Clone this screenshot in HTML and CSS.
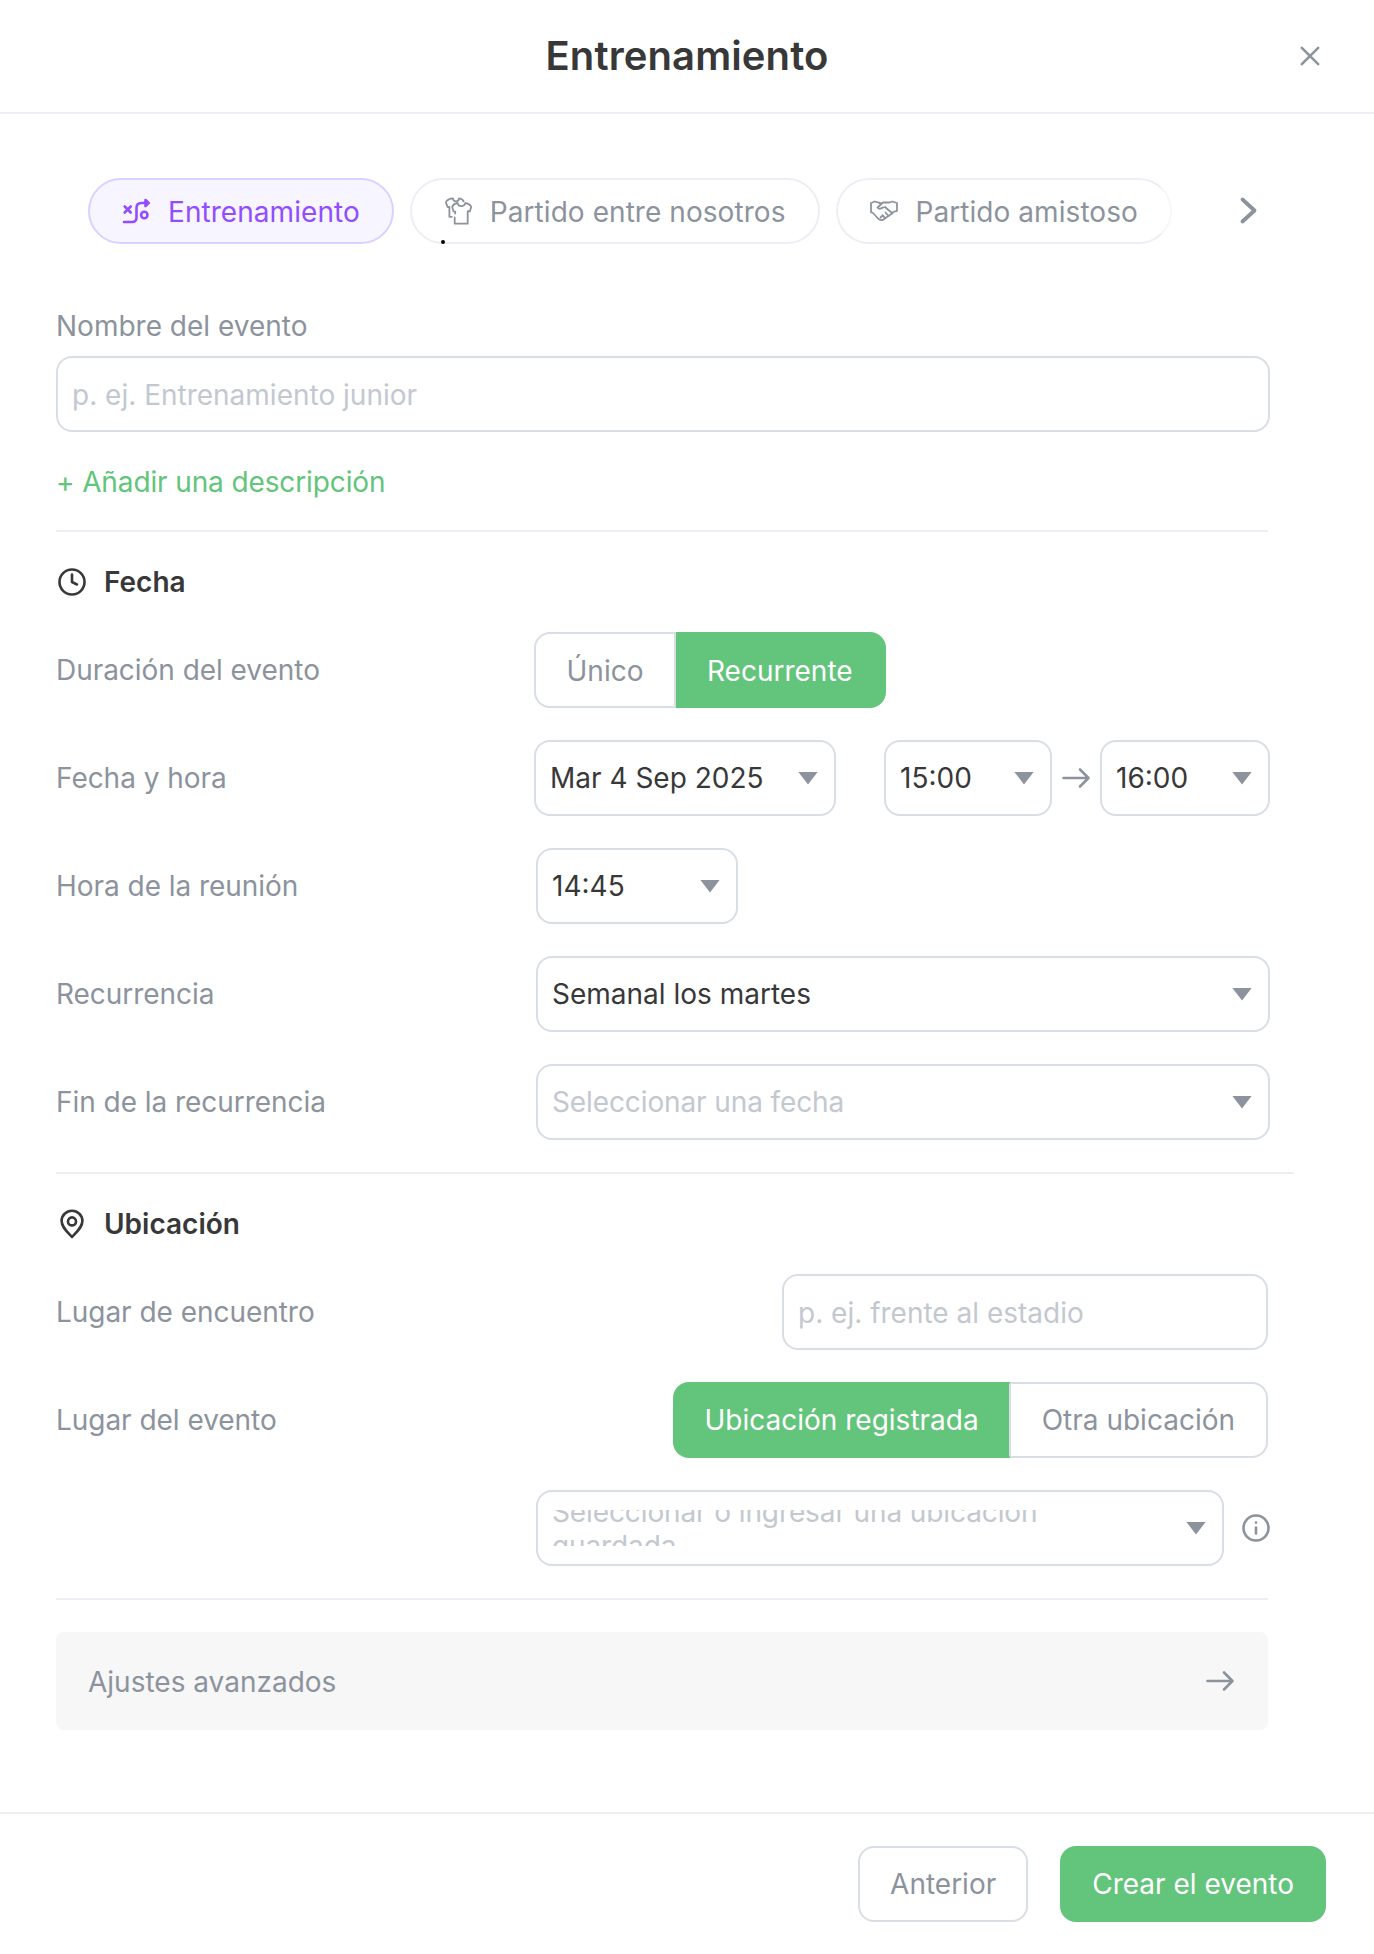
FILE: index.html
```html
<!DOCTYPE html>
<html lang="es">
<head>
  <meta charset="UTF-8" />
  <meta name="viewport" content="width=device-width, initial-scale=1.0"/>
  <title>Entrenamiento</title>
  <link rel="stylesheet" href="styles.css">
</head>
<body>

  <div class="modal">
    <header class="modal-header">
      <h1>Entrenamiento</h1>
      <button class="close" aria-label="Cerrar">
        <svg width="24" height="24" viewBox="0 0 24 24"><path d="M3.800 3.800l16.400 16.400M20.200 3.800l-16.400 16.400"/></svg>
      </button>
    </header>

    <main class="modal-body">
      <div class="types">
        <div class="type-list">
          <button class="type active">
            <svg width="32" height="32" viewBox="0 0 32 32">
              <path d="M4.700 11.500l6 6M10.700 11.500l-6 6M4 27h8q4.500 0 4.500-4.500V13q0-5 5-5h7"/>
              <path d="M25.500 5l3 3-3 3z" fill="currentColor"/>
              <circle cx="24.300" cy="20" r="3.200"/>
            </svg>
            Entrenamiento
          </button>
          <button class="type">
            <svg class="thin" width="32" height="32" viewBox="0 0 32 32">
              <path d="M9.800 21.800H7.400V11.800L5.600 12 4 7.600q.2-2.400 4.600-4l2.300-.2q.4 3 3.100 3T17 3.400q3.800.6 4.600 3"/>
              <path d="M12.700 22.500v6.200h13v-12.500l2.100.2 1.400-4.400q-1-3-5.800-4-1 3.200-4 3.200T15.500 8q-4.500.8-5.300 4l1.400 4.400 1.600.2v2"/>
            </svg>
            Partido entre nosotros
            <span class="type-dot"></span>
          </button>
          <button class="type">
            <svg class="thin" width="32" height="32" viewBox="0 0 32 32">
              <path d="M11.500 7.800L7 6.500 3 8v9.200l2 .8 5.500 6q3 2 4.500.7l9-6.200 1.200-1.500 3.800-1.200V8l-4.500-1.500-3 1H15l-5.500 5q1.800 2.500 5.500 0l2-.5 7.500 6.500"/>
              <path d="M11.500 7.800l2 .8M12.500 22.500l2-2M17.500 17.500l3 3.500M14.500 20.200l2.500 3"/>
            </svg>
            Partido amistoso
          </button>
        </div>
        <button class="next" aria-label="Siguiente">
          <svg width="32" height="32" viewBox="0 0 32 32"><path d="M9.500 4.500L21.500 15.500 9.500 26.500"/></svg>
        </button>
      </div>

      <label class="label" for="name">Nombre del evento</label>
      <input class="field name" id="name" type="text" placeholder="p. ej. Entrenamiento junior" />
      <a class="add">+ Añadir una descripción</a>

      <section class="group">
        <h2>
          <svg width="32" height="32" viewBox="0 0 32 32"><circle cx="16" cy="16" r="12.500"/><path d="M16 8.500V16l5 2.500"/></svg>
          Fecha
        </h2>
        <div class="row">
          <span class="label">Duración del evento</span>
          <div class="controls">
            <div class="switch">
              <button class="option once">Único</button>
              <button class="option active">Recurrente</button>
            </div>
          </div>
        </div>
        <div class="row">
          <span class="label">Fecha y hora</span>
          <div class="controls">
            <div class="field select date">Mar 4 Sep 2025</div>
            <div class="field select start">15:00</div>
            <svg class="arrow" width="32" height="32" viewBox="0 0 32 32"><path d="M3.500 16h25M20 7.500l8.500 8.500-8.500 8.500"/></svg>
            <div class="field select end">16:00</div>
          </div>
        </div>
        <div class="row">
          <span class="label">Hora de la reunión</span>
          <div class="controls inset">
            <div class="field select meeting">14:45</div>
          </div>
        </div>
        <div class="row">
          <span class="label">Recurrencia</span>
          <div class="controls inset">
            <div class="field select wide">Semanal los martes</div>
          </div>
        </div>
        <div class="row">
          <span class="label">Fin de la recurrencia</span>
          <div class="controls inset">
            <div class="field select wide empty">Seleccionar una fecha</div>
          </div>
        </div>
      </section>

      <section class="group group-wide">
        <h2>
          <svg width="32" height="32" viewBox="0 0 32 32"><path d="M16 29C11 23.500 5.600 19 5.600 13a10.400 10.200 0 0 1 20.800 0C26.400 19 21 23.500 16 29z"/><circle cx="16" cy="13.400" r="4"/></svg>
          Ubicación
        </h2>
        <div class="row">
          <span class="label">Lugar de encuentro</span>
          <input class="field place" type="text" placeholder="p. ej. frente al estadio" />
        </div>
        <div class="row">
          <span class="label">Lugar del evento</span>
          <div class="switch place-switch">
            <button class="option active">Ubicación registrada</button>
            <button class="option">Otra ubicación</button>
          </div>
        </div>
        <div class="row">
          <span class="label"></span>
          <div class="controls inset">
            <div class="field select saved empty">
              <div class="clip"><span>Seleccionar o ingresar una ubicación guardada</span></div>
            </div>
            <svg class="info" width="32" height="32" viewBox="0 0 32 32"><circle cx="16" cy="16" r="12.500"/><path d="M16 15.500v6"/><path d="M16 10.500v.1"/></svg>
          </div>
        </div>
      </section>

      <section class="group">
        <button class="advanced">
          <span>Ajustes avanzados</span>
          <svg class="arrow" width="32" height="32" viewBox="0 0 32 32"><path d="M3.500 16h25M20 7.500l8.500 8.500-8.500 8.500"/></svg>
        </button>
      </section>
    </main>

    <footer class="modal-footer">
      <button class="btn">Anterior</button>
      <button class="btn primary">Crear el evento</button>
    </footer>
  </div>

</body>
</html>
```

FILE: styles.css
```css
* {
  box-sizing: border-box;
}

body {
  margin: 0;
  background: #fff;
  color: #383838;
  font-family: Inter, sans-serif;
  font-size: 28px;
  line-height: 36px;
}

button,
input {
  font: inherit;
  letter-spacing: inherit;
  color: #8c939d;
  background: none;
  border: none;
  padding: 0;
  margin: 0;
}

svg {
  flex: none;
  fill: none;
  stroke: currentColor;
  stroke-width: 2.6;
  stroke-linecap: round;
  stroke-linejoin: round;
}

svg.thin {
  stroke-width: 1.8;
}

.modal {
  height: 1954px;
  display: flex;
  flex-direction: column;
}

.modal-header {
  display: grid;
  grid-template-columns: 80px 1fr 80px;
  align-items: center;
  height: 114px;
  padding-right: 24px;
  padding-left: 24px;
  border-bottom: 2px solid #ebeff3;
}

h1 {
  grid-column: 2;
  margin: 0;
  font-size: 40px;
  line-height: 48px;
  font-weight: 600;
  letter-spacing: 0.1px;
  text-align: center;
}

.close {
  height: 24px;
  line-height: 0;
}

.modal-body {
  flex: 1;
  padding: 64px 80px 0 56px;
}

.types {
  display: flex;
  align-items: center;
  justify-content: space-between;
  padding: 0 29px 0 32px;
  margin-bottom: 64px;
}

.type-list {
  display: flex;
  gap: 16px;
}

.type {
  position: relative;
  display: flex;
  align-items: center;
  gap: 16px;
  height: 66px;
  padding: 2px 32px 0 30px;
  border: 2px solid #ebeff3;
  border-radius: 33px;
  letter-spacing: 0.06px;
  white-space: nowrap;
}

.type svg {
  margin-bottom: 2px;
}

.type.active {
  color: #914dff;
  background: #f7f5ff;
  border-color: #d9d1ff;
}

.type:last-child {
  border-right-color: #f5f7f9;
}

.type-dot {
  position: absolute;
  left: 29px;
  bottom: -2px;
  width: 4px;
  height: 4px;
  border-radius: 50%;
  background: #000;
}

.next {
  height: 32px;
  line-height: 0;
}

.next svg {
  stroke-width: 3.8;
}

.label {
  display: block;
  color: #8c939d;
}

.field {
  height: 76px;
  padding: 0 14px;
  border: 2px solid #d9dee5;
  border-radius: 16px;
}

input.field {
  padding-top: 2px;
}

.field::placeholder {
  color: #c3c8d0;
  opacity: 1;
}

.name {
  display: block;
  width: 1214px;
  margin: 12px 0 32px;
}

.add {
  display: block;
  height: 66px;
  color: #63c47b;
  letter-spacing: -0.12px;
}

.group {
  display: flex;
  flex-direction: column;
  gap: 32px;
  width: 1212px;
  padding: 32px 0;
  border-top: 2px solid #ebeff3;
}

/* the divider above the location runs past the fields */
.group-wide {
  width: 1238px;
  padding-right: 26px;
}

h2 {
  display: flex;
  align-items: center;
  gap: 16px;
  margin: 0;
  font-size: 28px;
  line-height: 36px;
  font-weight: 600;
}

.row {
  display: flex;
  align-items: center;
  justify-content: space-between;
  height: 76px;
}

.row .label {
  letter-spacing: -0.04px;
}

.controls {
  display: flex;
  align-items: center;
  width: 736px;
  margin-right: -2px;
}

.controls.inset {
  width: 734px;
}

.select {
  display: flex;
  align-items: center;
  justify-content: space-between;
  padding-right: 16px;
}

.select::after {
  content: "";
  flex: none;
  width: 20px;
  height: 13px;
  background: #8c939d;
  clip-path: polygon(0 0, 100% 0, 50% 100%);
}

.empty {
  color: #c3c8d0;
  letter-spacing: -0.11px;
}

.date {
  width: 302px;
  margin-right: 48px;
}

.start {
  width: 168px;
}

.end {
  width: 170px;
}

.meeting {
  width: 202px;
}

.wide {
  width: 100%;
}

.saved {
  width: 688px;
}

/* only one line of height, longer hints get cut on both sides */
.clip {
  display: flex;
  align-items: center;
  width: 530px;
  height: 36px;
  padding-top: 2px;
  overflow: hidden;
}

.clip span {
  line-height: 34px;
}

.arrow {
  color: #8c939d;
}

.row .arrow {
  margin: 0 8px;
}

.info {
  margin-left: 16px;
  margin-right: -2px;
  color: #8c939d;
}

.place {
  width: 486px;
}

.switch {
  display: flex;
  height: 76px;
}

.option {
  padding: 0 30px;
  border: 2px solid #d9dee5;
}

.option:first-child {
  border-radius: 16px 0 0 16px;
}

.option:last-child {
  border-left: none;
  padding: 0 31px;
  border-radius: 0 16px 16px 0;
}

.option.once {
  width: 142px;
}

.controls .option {
  padding-top: 2px;
}

.option.active {
  color: #fff;
  background: #63c47b;
  border-color: #63c47b;
}

.place-switch .option.active {
  border-right-color: #d9dee5;
}

.advanced {
  display: flex;
  align-items: center;
  justify-content: space-between;
  height: 98px;
  padding: 0 32px;
  background: #f7f7f7;
  border-radius: 8px;
}

.advanced span {
  padding-top: 2px;
}

.modal-footer {
  display: flex;
  justify-content: flex-end;
  gap: 32px;
  height: 142px;
  padding: 32px 48px;
  border-top: 2px solid #ebeff3;
}

.btn {
  height: 76px;
  padding: 0 30px;
  border: 2px solid #d9dee5;
  border-radius: 16px;
}

.btn.primary {
  color: #fff;
  background: #63c47b;
  border-color: #63c47b;
}
```
